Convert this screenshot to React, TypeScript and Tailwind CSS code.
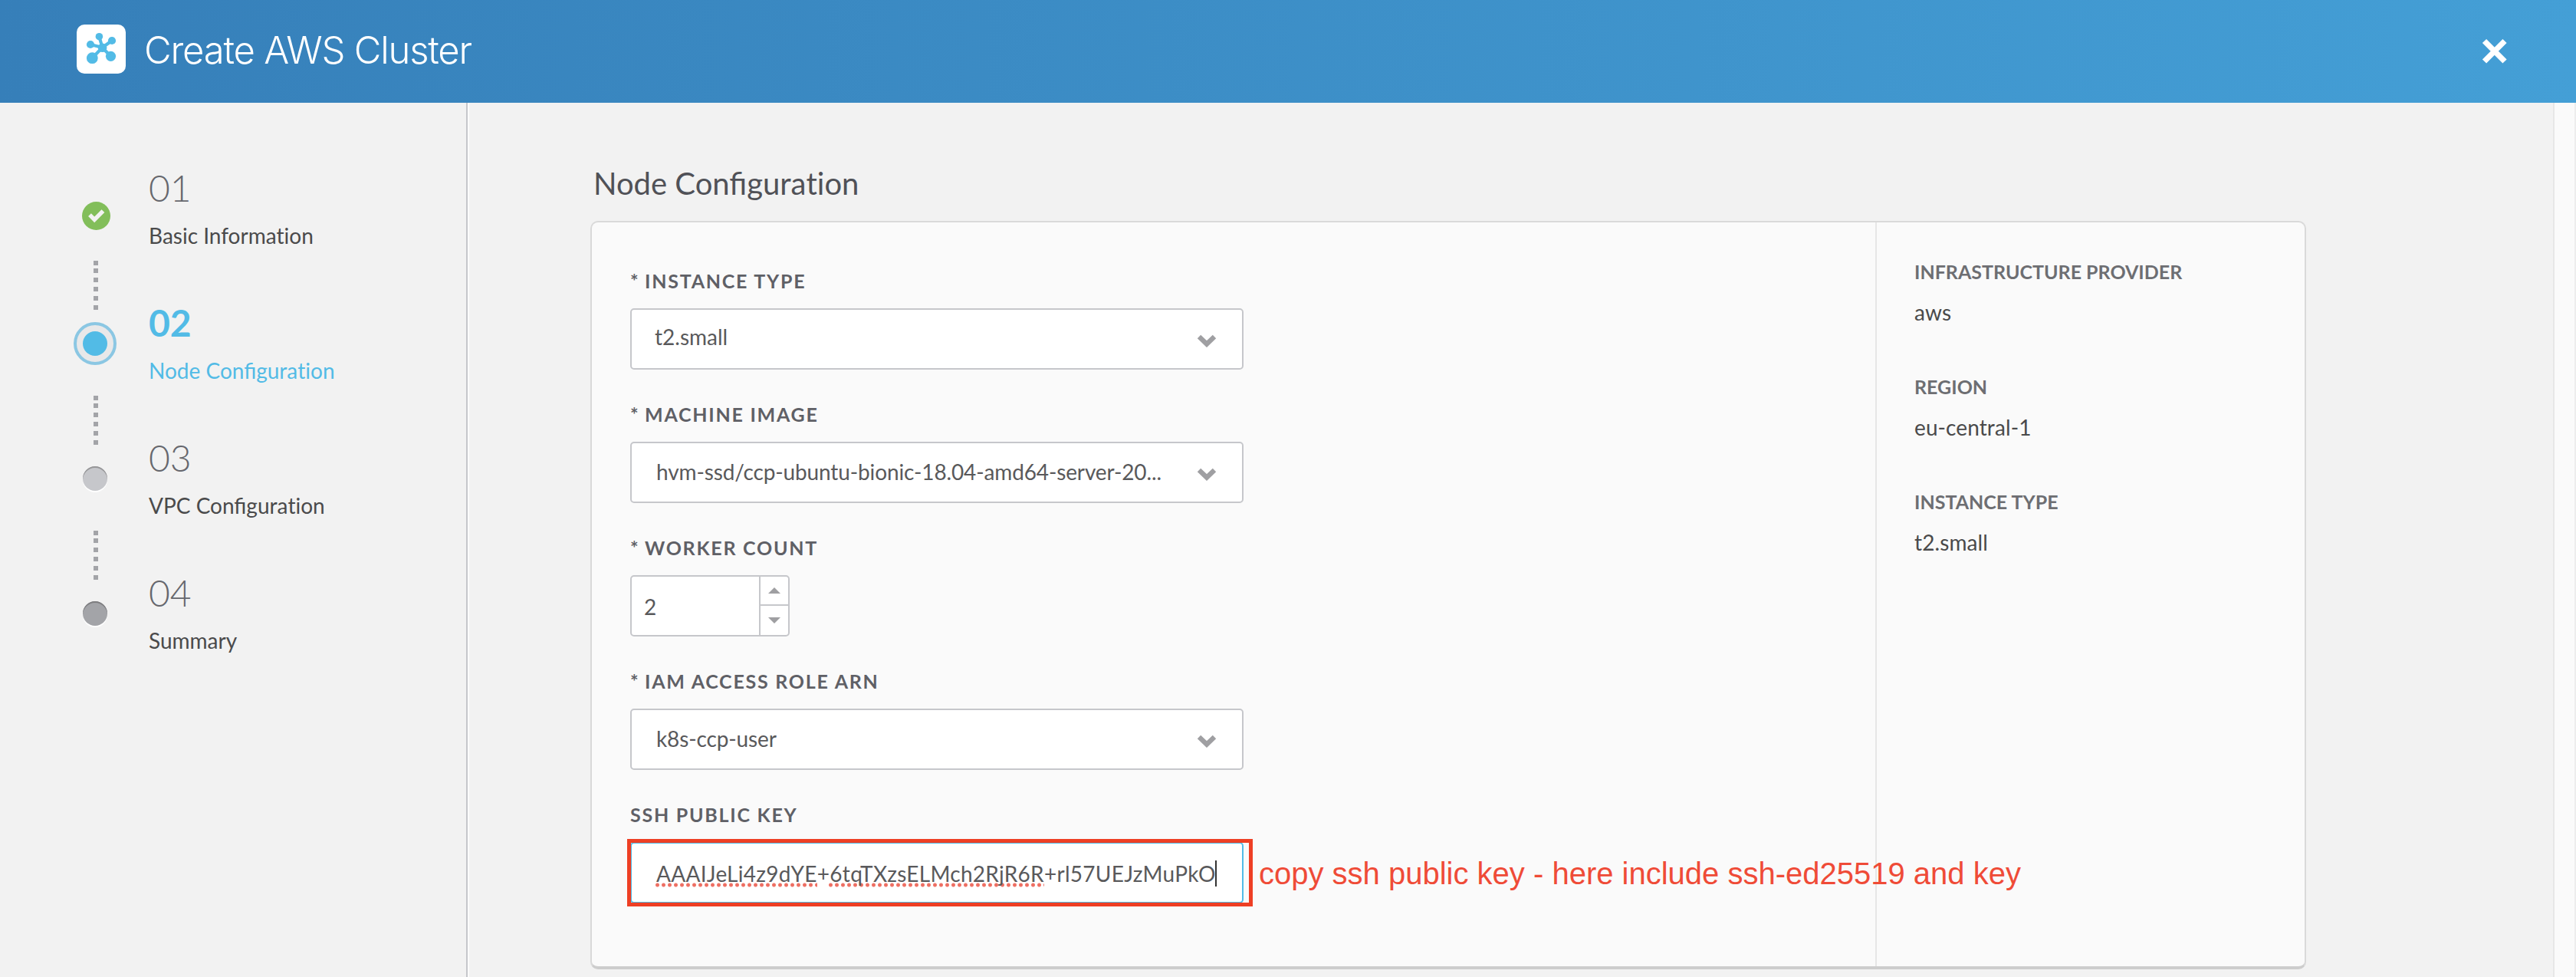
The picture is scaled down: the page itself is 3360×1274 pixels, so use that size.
import React from "react";

type StepState = "done" | "active" | "next" | "last";

const steps: { num: string; label: string; state: StepState }[] = [
  { num: "01", label: "Basic Information", state: "done" },
  { num: "02", label: "Node Configuration", state: "active" },
  { num: "03", label: "VPC Configuration", state: "next" },
  { num: "04", label: "Summary", state: "last" },
];

const summary = [
  { label: "INFRASTRUCTURE PROVIDER", value: "aws" },
  { label: "REGION", value: "eu-central-1" },
  { label: "INSTANCE TYPE", value: "t2.small" },
];

function ClusterLogo() {
  return (
    <div className="flex h-16 w-16 items-center justify-center rounded-[10px] bg-white">
      <svg width="64" height="64" viewBox="0 0 64 64" fill="#52bbe6" stroke="#52bbe6">
        <g strokeWidth="4.2" strokeLinecap="round">
          <path d="M33.5 30 L29.5 16" />
          <path d="M33.5 30 L46 21" />
          <path d="M33.5 30 L18 26" />
          <path d="M33.5 30 L20 44" />
          <path d="M33.5 30 L44 41" />
        </g>
        <g stroke="none">
          <circle cx="33.6" cy="30.3" r="5.8" />
          <circle cx="29.4" cy="15.7" r="4.8" />
          <circle cx="46" cy="21" r="5.1" />
          <circle cx="18" cy="26" r="5.1" />
          <circle cx="20.3" cy="43.7" r="7.4" />
          <circle cx="44.5" cy="41.3" r="6.6" />
        </g>
      </svg>
    </div>
  );
}

/* Keeps the "fi" ligature but leaves "ti" as two separate letters. */
function Words({ text }: { text: string }) {
  const parts = text.split("ti");
  return (
    <>
      {parts.map((p, i) => (
        <React.Fragment key={i}>
          {i > 0 && <span className="[font-variant-ligatures:none]">ti</span>}
          {p}
        </React.Fragment>
      ))}
    </>
  );
}

function StepMarker({ state }: { state: StepState }) {
  if (state === "done") {
    return (
      <svg className="mt-[39px] ml-0.5" width="37" height="37" viewBox="0 0 37 37">
        <circle cx="18.5" cy="18.5" r="18.5" fill="#82be5a" />
        <path d="M10 17.2 L16.2 23.4 L27.4 12.2" fill="none" stroke="#f2f2f2" strokeWidth="5.4" />
      </svg>
    );
  }
  if (state === "active") {
    return (
      <div className="mt-5 flex h-14 w-14 items-center justify-center rounded-full border-4 border-[#8bc7e3] bg-[#e8e8e9]">
        <div className="h-8 w-8 rounded-full bg-[#52bbe6]" />
      </div>
    );
  }
  if (state === "next") {
    return <div className="mt-8 h-8 w-8 rounded-full bg-[#c6c7cb] shadow-[inset_0_2px_0_#969698,0_2px_0_#ffffff]" />;
  }
  return <div className="mt-8 h-8 w-8 rounded-full bg-[#a3a4a8] shadow-[inset_0_2px_0_#7e7e80,0_2px_0_#ffffff]" />;
}

function Dots() {
  return (
    <div className="flex flex-col gap-1.5 pl-0.5">
      <i className="-mb-0.5 size-1.5 bg-[#a3a4a8]" />
      <i className="size-1.5 bg-[#a3a4a8]" />
      <i className="size-1.5 bg-[#a3a4a8]" />
      <i className="size-1.5 bg-[#a3a4a8]" />
      <i className="size-1.5 bg-[#a3a4a8]" />
      <i className="size-1.5 bg-[#a3a4a8]" />
    </div>
  );
}

function Label({ children, required = true }: { children: React.ReactNode; required?: boolean }) {
  return (
    <div className="flex h-[52px] items-start whitespace-pre text-[25px] leading-[33px] font-bold tracking-[1.75px] text-[#5f6066]">
      {required && <span className="w-[19px] tracking-normal">*</span>}
      {children}
    </div>
  );
}

function Select({ value, className }: { value: string; className: string }) {
  return (
    <div className="flex h-20 w-[800px] items-center justify-between rounded-[5px] border-2 border-[#c6c7cb] bg-white pr-[33px] pb-0.5">
      <span className={className}>{value}</span>
      <svg className="mt-1.5" width="26" height="17" viewBox="0 0 26 17">
        <path d="M3 3 L13 12.6 L23 3" fill="none" stroke="#9f9fa2" strokeWidth="6.4" />
      </svg>
    </div>
  );
}

function Misspelled({ children }: { children: React.ReactNode }) {
  return (
    <span className="relative">
      <span className="absolute top-[29px] -left-px right-0 h-1.5 bg-[radial-gradient(circle_at_2.5px_3px,#ee6b5e_0,#ee7468_2px,transparent_3px)] bg-[length:8px_6px]" />
      <span className="relative">{children}</span>
    </span>
  );
}

export default function App() {
  return (
    <div className="flex h-[1274px] w-[3360px] flex-col overflow-hidden bg-[#f2f2f2] font-['Lato',sans-serif] text-[28px] leading-[34px] text-[#4a4a4b]">
      <header className="flex h-[134px] shrink-0 items-center justify-between bg-linear-to-r from-[#367fb9] to-[#449fd6] pr-[88px] pl-[100px]">
        <div className="flex h-[128px] items-start gap-6 pt-[29px] pb-1.5">
          <ClusterLogo />
          <h1 className="mt-px font-['Inter',sans-serif] text-[49px] leading-[66px] font-light tracking-[-1.2px] text-white">
            Create AWS Cluster
          </h1>
        </div>
        <svg width="36" height="36" viewBox="0 0 36 36">
          <path d="M4.5 4.5 L31 31 M31 4.5 L4.5 31" stroke="#fff" strokeWidth="7.4" />
        </svg>
      </header>

      <div className="flex min-h-0 flex-1">
        <nav className="flex w-[610px] shrink-0 flex-col border-r-2 border-[#c6c7cb] pt-[90px] pl-24">
          {steps.map((s, i) => (
            <div key={s.num} className="flex h-44">
              <div className="relative flex w-14 flex-col items-center">
                <StepMarker state={s.state} />
                {i < steps.length - 1 && (
                  <div className="absolute top-[116px] left-6">
                    <Dots />
                  </div>
                )}
              </div>
              <div className="pl-[42px]">
                <div
                  className={
                    s.state === "active"
                      ? "h-[66px] text-[48px] leading-[42px] font-bold text-[#52bbe6]"
                      : "h-[66px] text-[48px] leading-[42px] font-light text-[#66676d]"
                  }
                >
                  {s.num}
                </div>
                <div className={s.state === "active" ? "text-[#52bbe6]" : ""}>
                  <Words text={s.label} />
                </div>
              </div>
            </div>
          ))}
        </nav>
        <div className="w-0.5 bg-[#fbfbfb]" />

        <main className="flex flex-1 flex-col pl-[158px]">
          <h2 className="mt-[81px] mb-[25px] h-12 pl-1 text-[40px] leading-[48px] text-[#505157]">
            <Words text="Node Configuration" />
          </h2>
          <section className="flex h-[976px] w-[2238px] rounded-[10px] border-2 border-b-4 border-[#d9d9d9] border-b-[#cdcdcd] bg-[#fafafa]">
            <div className="flex w-[1674px] flex-col gap-[42px] pt-[60px] pl-[50px] text-[#59595b]">
              <div>
                <Label>INSTANCE TYPE</Label>
                <Select value="t2.small" className="-mt-1 pl-[30px]" />
              </div>
              <div>
                <Label>MACHINE IMAGE</Label>
                <Select value="hvm-ssd/ccp-ubuntu-bionic-18.04-amd64-server-20..." className="pl-8 tracking-[-0.13px]" />
              </div>
              <div>
                <Label>WORKER COUNT</Label>
                <div className="flex h-20 w-[208px] rounded-[5px] border-2 border-[#c6c7cb] bg-white">
                  <div className="flex flex-1 items-center border-r-2 border-[#c6c7cb] pt-0.5 pl-4">2</div>
                  <div className="flex w-9 flex-col">
                    <div className="flex h-[38px] items-center justify-center border-b-2 border-[#c6c7cb]">
                      <svg width="16" height="8" viewBox="0 0 16 8" fill="#9f9fa2"><path d="M0 8 L8 0 L16 8Z" /></svg>
                    </div>
                    <div className="flex flex-1 items-center justify-center">
                      <svg width="16" height="8" viewBox="0 0 16 8" fill="#9f9fa2"><path d="M0 0 L8 8 L16 0Z" /></svg>
                    </div>
                  </div>
                </div>
              </div>
              <div>
                <Label>IAM ACCESS ROLE ARN</Label>
                <Select value="k8s-ccp-user" className="pl-8 tracking-[-0.13px]" />
              </div>
              <div>
                <Label required={false}>SSH PUBLIC KEY</Label>
                <div className="relative flex h-20 w-[800px] items-center rounded-[5px] border-2 border-[#52bbe6] bg-white pt-0.5 pl-8">
                  <div className="flex items-center whitespace-nowrap tracking-[0.28px]">
                    <Misspelled>AAAIJeLi4z9dYE</Misspelled>+<Misspelled>6tqTXzsELMch2RjR6R</Misspelled>+rl57UEJzMuPkO
                    <span className="-ml-px h-[34px] w-0.5 bg-[#333]" />
                  </div>
                  <div className="absolute -top-1.5 -left-1.5 h-[88px] w-[816px] border-[5px] border-[#ee3f24]" />
                  <div className="absolute top-[15px] left-[818px] whitespace-nowrap font-['Liberation_Sans',sans-serif] text-[40px] leading-[48px] text-[#ef4b37]">
                    copy ssh public key - here include ssh-ed25519 and key
                  </div>
                </div>
              </div>
            </div>
            <aside className="flex flex-1 flex-col border-l-2 border-[#e6e6e6] pt-[50px] pl-[49px]">
              {summary.map((f) => (
                <div key={f.label} className="h-[150px]">
                  <div className="h-[50px] text-[25px] leading-[29px] font-bold text-[#6d6e72]">{f.label}</div>
                  <div className="tracking-[0.1px]">{f.value}</div>
                </div>
              ))}
            </aside>
          </section>
        </main>
        <div className="w-[30px] border-x-2 border-l-[#e7e7e7] border-r-[#ededed] bg-[#fafafa]" />
      </div>
    </div>
  );
}
